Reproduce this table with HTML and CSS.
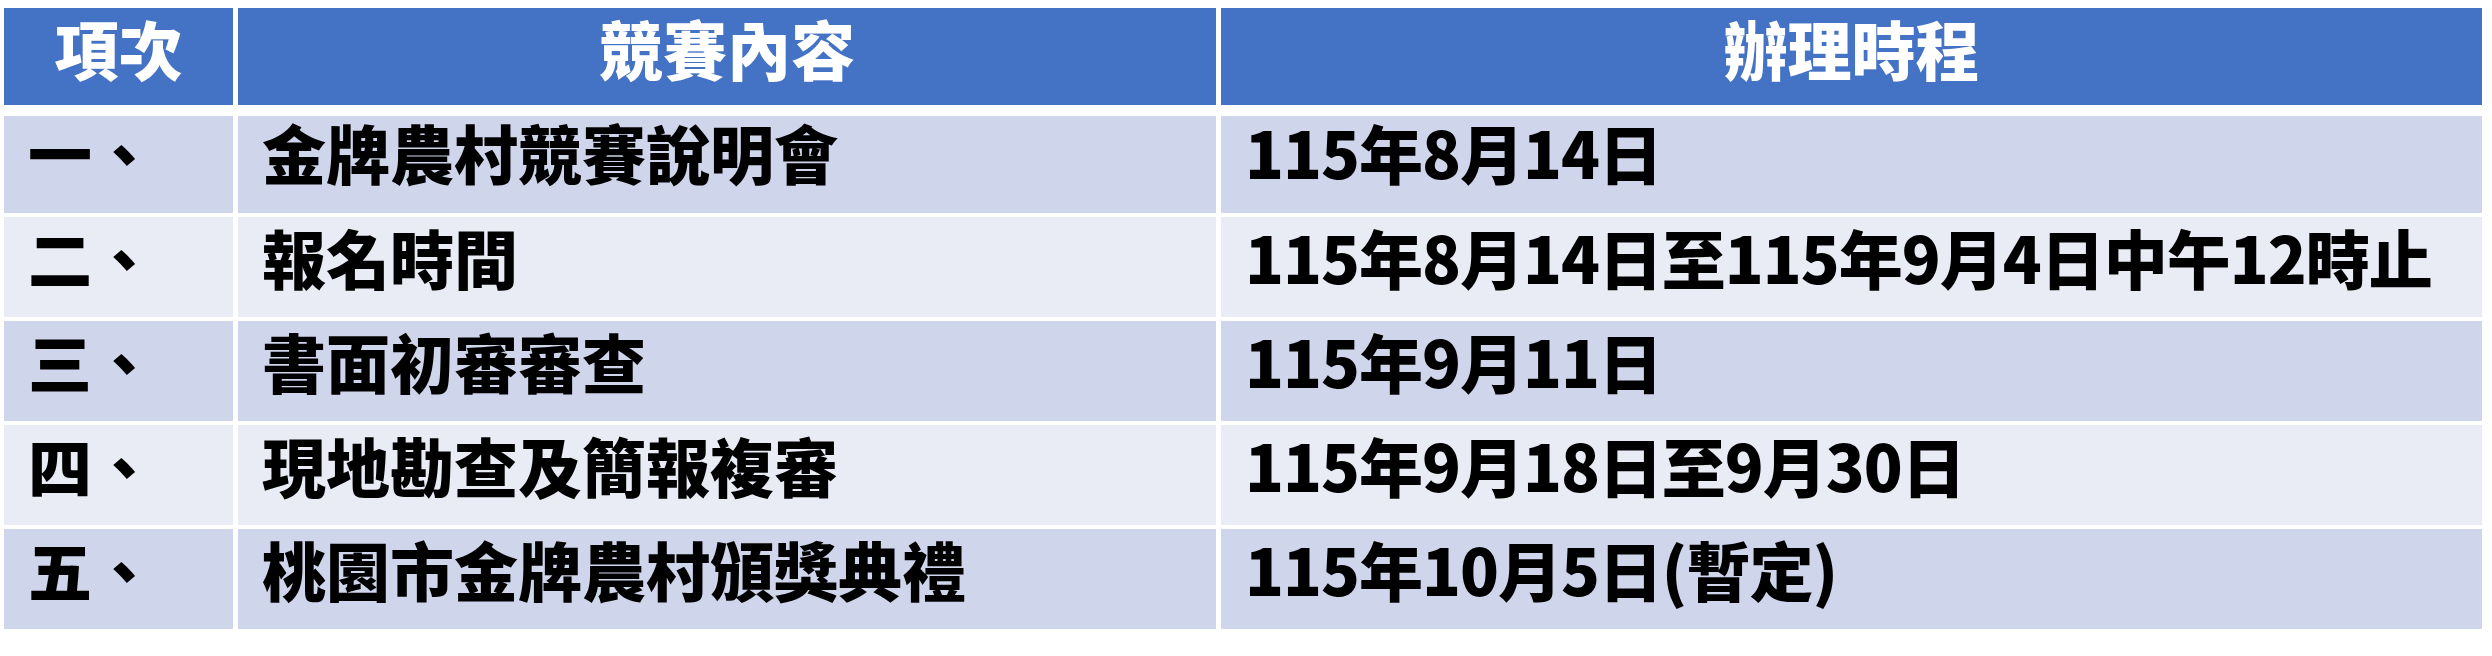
FILE: index.html
```html
<!DOCTYPE html>
<html lang="zh-Hant">
<head>
<meta charset="utf-8">
<title>金牌農村競賽時程</title>
<link rel="stylesheet" href="styles.css">
</head>
<body>
<div class="sheet">
  <div class="row head">
    <div class="cell">項次</div>
    <div class="cell">競賽內容</div>
    <div class="cell">辦理時程</div>
  </div>
  <div class="row odd first">
    <div class="cell">一、</div>
    <div class="cell">金牌農村競賽說明會</div>
    <div class="cell when">115年8月14日</div>
  </div>
  <div class="row even">
    <div class="cell">二、</div>
    <div class="cell">報名時間</div>
    <div class="cell when">115年8月14日至115年9月4日中午12時止</div>
  </div>
  <div class="row odd">
    <div class="cell">三、</div>
    <div class="cell">書面初審審查</div>
    <div class="cell when">115年9月11日</div>
  </div>
  <div class="row even">
    <div class="cell">四、</div>
    <div class="cell">現地勘查及簡報複審</div>
    <div class="cell when">115年9月18日至9月30日</div>
  </div>
  <div class="row odd">
    <div class="cell">五、</div>
    <div class="cell">桃園市金牌農村頒獎典禮</div>
    <div class="cell when">115年10月5日(暫定)</div>
  </div>
</div>
</body>
</html>
```

FILE: styles.css
```css
html, body {
  margin: 0;
  padding: 0;
  background: #ffffff;
}

body {
  font-family: "Noto Sans CJK TC", "Noto Sans CJK SC", sans-serif;
  font-weight: 900;
  color: #000000;
}

.sheet {
  padding: 8px 0 0 4px;
  display: flex;
  flex-direction: column;
  gap: 4px;
}

.row {
  display: grid;
  grid-template-columns: 229px 978px 1261px;
  column-gap: 5px;
  height: 100px;
}

.cell {
  font-size: 64px;
  line-height: 64px;
  padding: 7px 0 0 24px;
  white-space: nowrap;
}

.when {
  letter-spacing: -1px;
}

.head {
  height: 97px;
  margin-bottom: 7px;
}

.head .cell {
  background: #4472c4;
  color: #ffffff;
  text-align: center;
  padding-left: 0;
}

.first {
  height: 97px;
}

.first .cell {
  padding-top: 3px;
}

.odd .cell {
  background: #cfd5ea;
}

.even .cell {
  background: #e9ebf5;
}
```
